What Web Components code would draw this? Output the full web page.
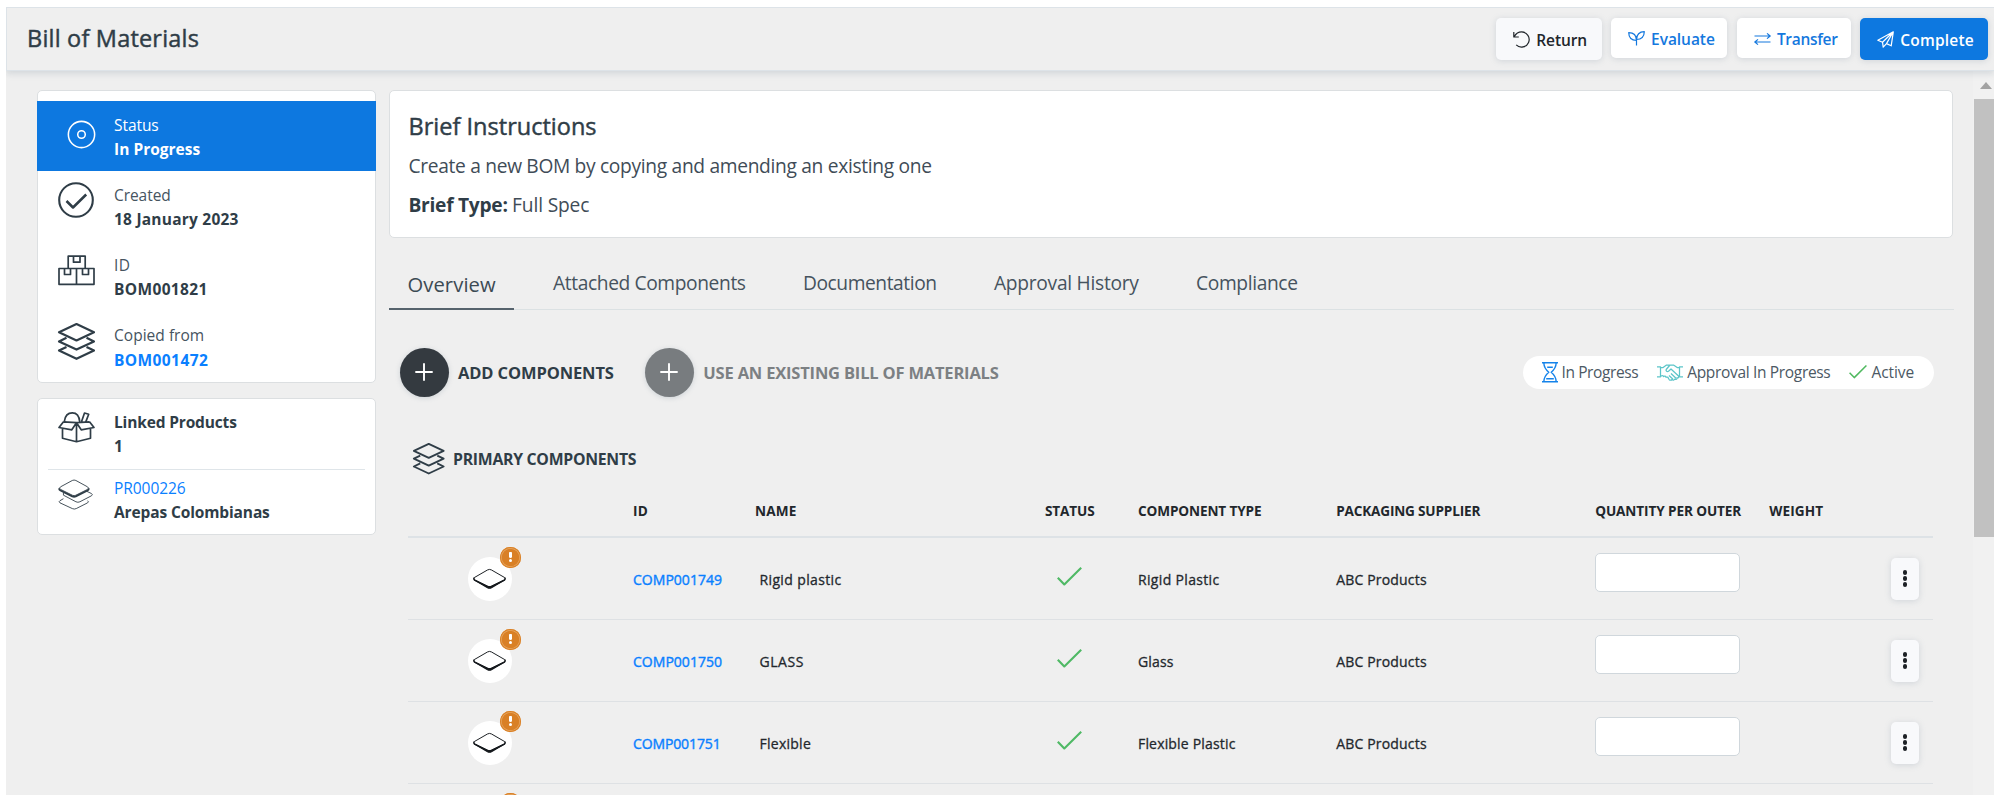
<!DOCTYPE html>
<html lang="en">
<head>
<meta charset="utf-8">
<title>Bill of Materials</title>
<style>
html,body{margin:0;height:801px;overflow:hidden;background:#fff}
body{font-family:"Open Sans","Noto Sans",sans-serif;color:#2f3d47;font-size:15.5px}
</style>
</head>
<body>
<bom-app></bom-app>
<script>
const ICONS = {
  undo:['0 0 17 17','<path d="M.8 1v5h5M1.2 5.6C3 2.500 5.500.9 8.600.9a7.600 7.600 0 1 1-5.400 13"/>'],
  plant:['0 0 17 15','<path d="M8.500 14.500V9M8.500 9.500C3.500 9.500.8 6.500.7 1.600c4.800 0 7.700 2.800 7.800 7.900zM8.500 8.500C8.700 3.700 11.500.8 16.300.7c-.1 5-2.600 7.600-7.800 7.800"/>'],
  swap:['0 0 17 12','<path d="M.5 3h15.500M13 .4 16.200 3 13 5.600M16.500 9H1M4 6.400.8 9 4 11.600"/>'],
  plane:['0 0 17 17','<path d="M.8 9.200 16.300.8 14.200 14.800 9.500 12.600 6.200 16.200 5.500 11.200zM5.500 11.200 16.300.8 9.500 12.600"/>'],
  target:['0 0 30 30','<g stroke-width="1.600"><circle cx="15" cy="15" r="13.600"/><circle cx="15" cy="15" r="3.900"/></g>'],
  done:['0 0 36 36','<g stroke-width="2.100"><circle cx="18" cy="18" r="16.800"/><path d="M8.500 19l6.500 6.500L28.200 12.500" stroke-width="2.500"/></g>'],
  boxes:['0 0 37 35','<g stroke-width="1.700"><path d="M10.200 13.500V1.200h17v12.300M15.500 1.200v6h6.500v-6M1 13.500h35v15.800H1zM18.500 13.500v15.800M6.500 13.500v6h6v-6M24.500 13.500v6h6v-6"/></g>'],
  layers:['0 0 37 37','<g stroke-width="2.200"><path d="M18.500 1 36 9.200 18.500 17.400 1 9.200z"/><path d="M8.500 14.800 1 18.400l17.500 8.200L36 18.400l-7.500-3.600M8.500 24 1 27.600l17.500 8.200L36 27.600 28.500 24"/></g>'],
  openbox:['0 0 37 31','<g stroke-width="1.700"><path d="M18.500 10.500v19M4.500 16v10.200l14 3.500 14-3.500V16M5.500 9.800l13 .9 13-.9M5.500 9.800 1 15.500l12.800 2.300 4.700-7.100 4.700 7.100L36 15.500 31.500 9.800M6.300 9.500C7 4.200 9.800.9 14.300.9c4.300 0 7 3 7.500 9.200M23.500 9.800 26.500 1l4.200 1.300-2.800 7.300"/></g>'],
  tiles:['0 0 36 31','<g stroke-width=".9"><path d="M2.500 8 14.500 1.500q1.800-.9 3.600 0L30 8q2 1.200 0 2.500l-12 6q-1.600.8-3.400 0L2.500 10.500q-2-1.200 0-2.500z"/><path d="M5.500 14v2.400l12.700 6.700q2 1 4 0L34 17q1.600-1.200 0-2.200L29 12.400M5.500 20 2 22q-1.700 1 0 2.200l12.500 5.800q2 1 4 0L30 24.200q1.700-1 0-2.200"/></g><path d="M1 9.500q.3 1.500 1.500 2.200l12 6q1.800.8 3.500 0l12-6q1.300-.8 1.200-2.200" stroke-width="1.900"/>'],
  tile:['0 0 36 22','<path d="M3 9.500 16 2q2-1.100 4 0l13 7.500" stroke-width="1"/><path d="M2.800 9.700q-2 1.300 0 2.700L16 19.200q2 1 4 0l13.200-6.800q2-1.400 0-2.700" stroke-width="1.500"/><path d="M2.500 12.300 16 18.700q2 1 4 0l13.500-6.400L20 20.300q-2 1.100-4 0z" fill="currentColor"/>'],
  plus:['0 0 18 18','<path d="M9 .3v17.400M.3 9h17.400" stroke-width="1.900"/>'],
  glass:['0 0 16 20.500','<g stroke-width="1.400"><path d="M0 .8h16M0 19.700h16M1.800.8C2 6 4 8 6.800 10.200 4 12.500 2 14.500 1.800 19.700M14.200.8C14 6 12 8 9.200 10.200c2.800 2.300 4.800 4.300 5 9.500M4.200 16.800h7.600M5.200 5.200h5.600"/></g>'],
  shake:['0 0 26 17','<g stroke-width="1.250"><path d="M0 2.800h3.500v10H0M26 2.800h-3.500v10H26M3.500 3.500h2.600L9.500 1H13l-3.800 4.500c-.6 1.500 1 2.500 2.300 1.700L14 5l7.500 7c.7 1.200-.3 2.200-1.500 1.800.3 1.200-1 2-2.200 1.300-.4 1-1.800 1.300-2.600.4-.8 1-2.400.8-3 0l-.8-1.200c-.3-1.300-1.500-1.500-2.400-1-.3-1.200-1.500-1.500-2.400-.8-.3-.8-1-1-1.600-.7H3.500M13 1h3.500l3.700 2.500h2.300M14 9.500l5 4.800M12 11.500l4 3.800M21.500 12h1"/></g>'],
  tick:['0 0 25 19','<path d="M.8 10.700 7.300 17.500 24.200.8" stroke-width="2.100"/>']
};
const define = (tag, css, html, setup) => customElements.define(tag, class extends HTMLElement {
  connectedCallback() {
    if (this.shadowRoot) return;
    const root = this.attachShadow({mode:'open'});
    const t = document.createElement('template');
    t.innerHTML = `<style>*{box-sizing:border-box}${css}</style>` + (typeof html === 'function' ? html(this) : html);
    root.append(t.content.cloneNode(true));
    if (setup) setup(this);
  }
});
const a = (el, n, d = '') => el.getAttribute(n) ?? d;

define('bom-app', `
:host{display:block;width:2001px;height:801px;padding:7px 7px 6px 6px;box-sizing:border-box}
.frame{display:flex;flex-direction:column;height:788px;background:#efefef;overflow:hidden}
.body{display:flex;flex:1;min-height:0}
.side{width:338.500px;margin:19px 0 0 31px;display:flex;flex-direction:column;gap:15px}
main{width:1565px;margin:19px 0 0 13px}
scroll-rail{margin-left:auto}`,
`<div class="frame">
<app-bar></app-bar>
<div class="body">
 <div class="side">
  <side-card style="padding-top:9.500px;height:293px">
   <side-item active icon="target" size="29"><fit-text w="43">Status</fit-text><fit-text slot="v" w="84.500">In Progress</fit-text></side-item>
   <side-item icon="done" size="36" style="--icon:11.500px"><fit-text w="55">Created</fit-text><fit-text slot="v" w="123">18 January 2023</fit-text></side-item>
   <side-item icon="boxes" size="37" style="--icon:13.700px"><fit-text w="14.500">ID</fit-text><fit-text slot="v" w="92">BOM001821</fit-text></side-item>
   <side-item icon="layers" size="37" style="--icon:11.500px"><fit-text w="88.500">Copied from</fit-text><fit-text slot="v" w="92.500" style="color:#0a80ff">BOM001472</fit-text></side-item>
  </side-card>
  <side-card style="height:137px">
   <side-item icon="openbox" size="37" style="height:69.500px;--top:10.500px;--icon:13px"><fit-text w="121" style="font-weight:700;color:#2f3d47">Linked Products</fit-text><fit-text slot="v" w="6">1</fit-text></side-item>
   <div style="height:1px;background:#dfe5e9;margin:0 9.500px"></div>
   <side-item icon="tiles" size="35.500" style="height:65px;--top:6.500px;--icon:9.500px"><fit-text w="70" style="color:#0a80ff">PR000226</fit-text><fit-text slot="v" w="154">Arepas Colombianas</fit-text></side-item>
  </side-card>
 </div>
 <main>
  <brief-card></brief-card>
  <tab-strip></tab-strip>
  <action-row></action-row>
  <component-table></component-table>
 </main>
 <scroll-rail></scroll-rail>
</div></div>`);

define('app-bar', `
:host{display:flex;height:64px;flex:none;border:1px solid #dde3e8;border-right:0;box-shadow:0 3px 6px rgba(120,135,150,.22);position:relative;padding:10px 6px 0 20px;box-sizing:border-box}
h1{margin:0;font-size:23.500px;font-weight:400;-webkit-text-stroke:.450px;line-height:32px;padding-top:4px;flex:1}
.b{display:flex;align-items:flex-start;gap:9.300px}`,
`<h1><fit-text w="169.500">Bill of Materials</fit-text></h1>
<div class="b">
<tool-button kind="plain" icon="undo" w="105.500" ic="17"><fit-text w="49">Return</fit-text></tool-button>
<tool-button kind="white" icon="plant" w="116.500" ic="17"><fit-text w="62">Evaluate</fit-text></tool-button>
<tool-button kind="white" icon="swap" w="114" ic="17"><fit-text w="59">Transfer</fit-text></tool-button>
<tool-button kind="blue" icon="plane" w="128" ic="17"><fit-text w="72">Complete</fit-text></tool-button>
</div>`);

define('tool-button', `
:host{display:block}
button{all:unset;box-sizing:border-box;display:flex;align-items:center;gap:6.200px;padding:1px 0 0 17px;height:42px;border-radius:5px;font:600 15.500px "Open Sans",sans-serif;box-shadow:0 1px 6px rgba(130,145,160,.28)}
.plain{background:#f8f9fb;color:#21262b}
.white{background:#fff;color:#1478de;height:40px}
.blue{background:#0d78e0;color:#fff}`,
el => `<button class="${a(el,'kind')}" style="width:${a(el,'w')}px"><line-icon name="${a(el,'icon')}" size="${a(el,'ic')}"></line-icon><slot></slot></button>`);

define('line-icon', `:host{display:inline-block;flex:none;line-height:0}svg{display:block;overflow:visible;fill:none;stroke:currentColor;stroke-width:1.200;stroke-linejoin:round}`,
el => { const [vb, body] = ICONS[a(el,'name')]; const [,,w,h] = vb.split(' ').map(Number); const s = +a(el,'size');
  return `<svg viewBox="${vb}" width="${s}" height="${s*h/w}">${body}</svg>`; });

define('side-card', `:host{display:block;background:#fff;border:1px solid #dcdfe1;border-radius:5px;box-sizing:border-box}`, `<slot></slot>`);

define('side-item', `
:host{display:flex;height:70.300px}
:host([active]){background:#0d78e0;color:#fff;margin:0 -1px;padding-left:1px}
.i{width:76px;padding:var(--icon,12px) 0 0 20px;flex:none}
:host([active]) .i{padding:19.500px 0 0 29px}
.t{padding-top:var(--top,12px);line-height:24.300px}
.l{color:#46545f}
:host([active]) .l{color:#fff}
.v{font-weight:700}`,
el => `<div class="i"><line-icon name="${a(el,'icon')}" size="${a(el,'size')}"></line-icon></div><div class="t"><div class="l"><slot></slot></div><div class="v"><slot name="v"></slot></div></div>`);

define('brief-card', `
:host{display:block;height:148px;width:1564px;background:#fff;border:1px solid #dcdfe1;border-radius:5px;padding:19px 19px;box-sizing:border-box}
h2{margin:0;font-size:23.500px;font-weight:400;-webkit-text-stroke:.450px;line-height:32px}
p{margin:0;font-size:19.200px;line-height:39px;color:#3f4c57}
b{font-weight:700;color:#2f3d47}`,
`<h2><fit-text w="185.500">Brief Instructions</fit-text></h2>
<p style="margin-top:3.500px"><fit-text w="521">Create a new BOM by copying and amending an existing one</fit-text></p>
<p><b><fit-text w="97">Brief Type:</fit-text></b><fit-text w="75" style="margin-left:4.500px">Full Spec</fit-text></p>`);

define('tab-strip', `
:host{display:flex;height:72px;border-bottom:1px solid #dbe1e3;box-sizing:border-box;font-size:19.200px;color:#46535e;line-height:28px}
div{padding-top:31px;height:72px;flex:none}
.on{font-size:20.200px;width:125px;padding:32px 0 0 19px;border-bottom:2px solid #56636d;color:#3c4a54}`,
`<div class="on"><fit-text w="86">Overview</fit-text></div>
<div style="width:250.500px;padding-left:39.500px"><fit-text w="190.500">Attached Components</fit-text></div>
<div style="width:191px;padding-left:39px"><fit-text w="131.500">Documentation</fit-text></div>
<div style="width:202px;padding-left:39px"><fit-text w="142.500">Approval History</fit-text></div>
<div style="padding-left:39px"><fit-text w="99.500">Compliance</fit-text></div>`);

define('action-row', `
:host{display:flex;align-items:center;height:49px;margin:37.500px 19.500px 0 11px;font-weight:700;font-size:16.500px}
.c{width:49px;height:49px;border-radius:50%;background:#343a40;color:#fff;display:flex;align-items:center;justify-content:center;margin-right:9.500px;box-shadow:0 1px 5px rgba(130,145,160,.3)}
.off{color:#7c8083}.off.c{background:#787c7f;color:#fff;margin-left:31px}
legend-pill{margin-left:auto}`,
`<span class="c"><line-icon name="plus" size="18"></line-icon></span><fit-text w="154">ADD COMPONENTS</fit-text>
<span class="c off"><line-icon name="plus" size="18"></line-icon></span><fit-text class="off" w="293.500">USE AN EXISTING BILL OF MATERIALS</fit-text>
<legend-pill></legend-pill>`);

define('legend-pill', `
:host{display:flex;align-items:center;width:411.500px;height:33px;border-radius:17px;background:#fff;padding-left:19px;box-sizing:border-box;font-weight:400;font-size:15.500px;color:#4c5964}
line-icon{margin-right:4px}`,
`<line-icon name="glass" size="16" style="color:#1583ea"></line-icon><fit-text w="75">In Progress</fit-text>
<line-icon name="shake" size="26" style="color:#5cc5c9;margin-left:19px"></line-icon><fit-text w="141.500">Approval In Progress</fit-text>
<line-icon name="tick" size="18" style="color:#4fb95f;margin-left:19px"></line-icon><fit-text w="41">Active</fit-text>`);

define('component-table', `
:host{display:block;margin-left:19px;width:1525.500px}
h3{display:flex;align-items:center;height:32px;margin:46.500px 0 0 5px;font-size:15.800px;gap:9px}
.head{display:grid;grid-template-columns:225.500px 122px 290px 93px 198.200px 259px 174px 1fr;height:63px;border-bottom:2px solid #dde2e6;font-weight:700;font-size:13.600px;color:#22272c;line-height:20px;padding-top:25.500px}`,
`<h3><line-icon name="layers" size="31.500"></line-icon><fit-text w="181.500">PRIMARY COMPONENTS</fit-text></h3>
<div class="head"><i></i><fit-text w="13.500">ID</fit-text><fit-text w="40">NAME</fit-text><fit-text w="48">STATUS</fit-text><fit-text w="122">COMPONENT TYPE</fit-text><fit-text w="142.500">PACKAGING SUPPLIER</fit-text><fit-text w="144.500">QUANTITY PER OUTER</fit-text><fit-text w="52.500">WEIGHT</fit-text></div>
<component-row code="COMP001749" cw="87.500" name="Rigid plastic" nw="80.500" type="Rigid Plastic" tw="80"></component-row>
<component-row code="COMP001750" cw="87.500" name="GLASS" nw="43" type="Glass" tw="34"></component-row>
<component-row code="COMP001751" cw="86" name="Flexible" nw="50" type="Flexible Plastic" tw="96"></component-row>
<component-row blank></component-row>`);

define('component-row', `
:host{display:grid;grid-template-columns:225.500px 126.500px 285.500px 93px 198.200px 258px 296.500px 1fr;height:82px;border-bottom:1px solid #dee1e4;box-sizing:border-box;font-weight:400;-webkit-text-stroke:.3px;font-size:14px;color:#23282d;line-height:20px}
fit-text{margin-top:31.800px}
.code{color:#0a80ff;-webkit-text-stroke:.4px}
.p{position:relative;width:44px;height:44px;border-radius:50%;background:#fff;margin:19px 0 0 60px;display:flex;align-items:center;justify-content:center;color:#15191d}
.w{position:absolute;left:32px;top:-10.500px;width:21px;height:21px;border-radius:50%;background:#d98026;box-shadow:inset 0 0 0 1px #d98026,inset 0 0 0 1.700px #e7a865}
.w:before{content:"";position:absolute;left:9px;top:5px;width:3.400px;height:6.500px;background:#fff;border-radius:1px 1px 2px 2px}
.w:after{content:"";position:absolute;left:9.100px;top:12.600px;width:3.200px;height:3.200px;background:#fff;border-radius:50%}
.s{color:#4fb965;padding:28.500px 0 0 11.500px}
input{all:unset;display:block;box-sizing:border-box;width:145px;height:39.500px;border:1px solid #d0d7dc;border-radius:5px;background:#fff;margin:14.500px 0 0 .8px}
.k{width:28px;height:42px;border-radius:5px;background:#f8f9fb;box-shadow:0 1px 6px rgba(130,145,160,.28);margin:19.500px 0 0 .3px;display:flex;flex-direction:column;align-items:center;justify-content:center;gap:1px}
.k i{width:4.700px;height:4.700px;border-radius:50%;background:#1d2125}`,
el => `<div class="p"><line-icon name="tile" size="35"></line-icon><span class="w"></span></div>` + (el.hasAttribute('blank') ? '' :
`<fit-text class="code" w="${a(el,'cw')}">${a(el,'code')}</fit-text><fit-text w="${a(el,'nw')}">${a(el,'name')}</fit-text>
<div class="s"><line-icon name="tick" size="25"></line-icon></div>
<fit-text w="${a(el,'tw')}">${a(el,'type')}</fit-text><fit-text w="89">ABC Products</fit-text>
<div><input aria-label="Quantity per outer"></div><div class="k"><i></i><i></i><i></i></div>`));

define('scroll-rail', `
:host{display:block;width:21.500px;background:#f1f1f1;padding:11px 0 0 1px;box-sizing:border-box}
.u{width:0;height:0;border:6.500px solid transparent;border-top:0;border-bottom:7px solid #a3a3a3;margin-left:6px}
.t{height:438px;margin-top:9.500px;background:#c1c1c1}`, `<div class="u"></div><div class="t"></div>`);

/* Tracks a label so that its glyphs span the width given in "w". Defined last so every label is already placed. */
define('fit-text', `:host{display:inline-block;white-space:nowrap;flex:none}span{display:inline-block}`, `<span><slot></slot></span>`, el => {
  const s = el.shadowRoot.querySelector('span');
  const n = el.textContent.length;
  const size = parseFloat(getComputedStyle(el).fontSize);
  const gap = (+a(el,'w') + size * .11 - s.getBoundingClientRect().width) / n;
  s.style.letterSpacing = gap.toFixed(3) + 'px';
});
</script>
</body>
</html>
